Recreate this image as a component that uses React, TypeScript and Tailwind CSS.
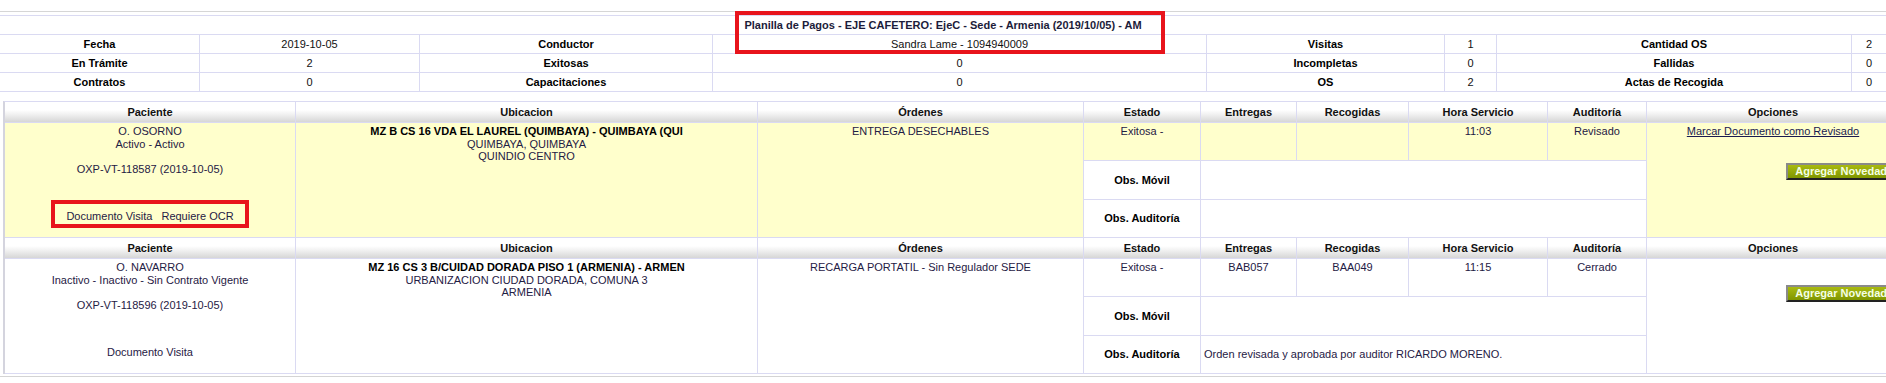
import React from "react";

const LAV = "border-[#dadaf2]";

function TopCell({ children, bold, last }: { children?: React.ReactNode; bold?: boolean; last?: boolean }) {
  return (
    <div
      className={`flex h-[19px] items-center justify-center border-b ${last ? "" : "border-r"} ${LAV} ${
        bold ? "font-bold text-black" : "text-[#111111]"
      }`}
    >
      {children}
    </div>
  );
}

function Head({ children, last }: { children: React.ReactNode; last?: boolean }) {
  return (
    <div
      className={`flex h-[21px] items-center justify-center border-b ${last ? "" : "border-r"} ${LAV} bg-[linear-gradient(to_bottom,#ffffff_40%,#f2f2f2_60%,#d6d6d6)] font-bold text-[#111111]`}
    >
      {children}
    </div>
  );
}

function HeaderRow() {
  return (
    <div className="grid grid-cols-[291px_462px_326px_117px_96px_112px_139px_99px_252px]">
      <Head>Paciente</Head>
      <Head>Ubicacion</Head>
      <Head>Órdenes</Head>
      <Head>Estado</Head>
      <Head>Entregas</Head>
      <Head>Recogidas</Head>
      <Head>Hora Servicio</Head>
      <Head>Auditoría</Head>
      <Head last>Opciones</Head>
    </div>
  );
}

function Button() {
  return (
    <span className="inline-flex h-[17px] items-center border-2 border-t-[#8a8a8a] border-l-[#8a8a8a] border-b-[#222222] border-r-[#222222] bg-[linear-gradient(to_bottom,#a9ba10,#7f9600)] px-[7px] text-[11px] font-bold text-[#f4ffe4]">
      Agregar Novedad
    </span>
  );
}

type Rec = {
  yellow: boolean;
  name: string;
  status: string;
  code: string;
  ocr: boolean;
  addr: string;
  addr2: string;
  addr3: string;
  order: string;
  entregas: string;
  recogidas: string;
  hora: string;
  auditoria: string;
  obsAud: string;
  link: boolean;
};

function Record({ r }: { r: Rec }) {
  const bg = r.yellow ? "bg-[#ffffcc]" : "bg-white";
  const cell = `border-b border-r ${LAV}`;
  return (
    <div className="grid grid-cols-[291px_462px_326px_117px_96px_112px_139px_99px_252px] grid-rows-[38px_39px_38px] leading-[1.15] text-[#1f2044]">
      <div className={`row-span-3 flex flex-col items-center pt-[2px] ${cell} ${bg}`}>
        <span>{r.name}</span>
        <span>{r.status}</span>
        <span className="mt-[12.65px]">{r.code}</span>
        <div className="relative mt-[34px]">
          <span>Documento Visita</span>
          {r.ocr && <span className="ml-[9px]">Requiere OCR</span>}
          {r.ocr && (
            <div className="absolute left-[-15px] right-[-15px] top-[-10px] bottom-[-6px] border-4 border-[#e8141c]" />
          )}
        </div>
      </div>
      <div className={`row-span-3 flex flex-col items-center pt-[2px] ${cell} ${bg}`}>
        <span className="font-bold text-black">{r.addr}</span>
        <span>{r.addr2}</span>
        <span>{r.addr3}</span>
      </div>
      <div className={`row-span-3 flex flex-col items-center pt-[2px] ${cell} ${bg}`}>
        <span>{r.order}</span>
      </div>
      <div className={`flex justify-center pt-[2px] ${cell} ${bg}`}>Exitosa -</div>
      <div className={`flex justify-center pt-[2px] ${cell} ${bg}`}>{r.entregas}</div>
      <div className={`flex justify-center pt-[2px] ${cell} ${bg}`}>{r.recogidas}</div>
      <div className={`flex justify-center pt-[2px] ${cell} ${bg}`}>{r.hora}</div>
      <div className={`flex justify-center pt-[2px] ${cell} ${bg}`}>{r.auditoria}</div>
      <div className={`row-span-3 flex flex-col items-center pt-[2px] border-b ${LAV} ${bg}`}>
        {r.link && (
          <a className="text-[#1a1a50] underline" href="#">
            Marcar Documento como Revisado
          </a>
        )}
        <div className={`flex w-full justify-end pr-[3px] ${r.link ? "mt-[25px]" : "mt-[24px]"}`}>
          <Button />
        </div>
      </div>
      <div className={`flex items-center justify-center font-bold text-black ${cell} bg-white`}>Obs. Móvil</div>
      <div className={`col-span-4 ${cell} bg-white`} />
      <div className={`flex items-center justify-center font-bold text-black ${cell} bg-white`}>Obs. Auditoría</div>
      <div className={`col-span-4 flex items-center pl-[3px] ${cell} bg-white`}>{r.obsAud}</div>
    </div>
  );
}

export default function App() {
  const recs: Rec[] = [
    {
      yellow: true,
      name: "O. OSORNO",
      status: "Activo - Activo",
      code: "OXP-VT-118587 (2019-10-05)",
      ocr: true,
      addr: "MZ B CS 16 VDA EL LAUREL (QUIMBAYA) - QUIMBAYA (QUI",
      addr2: "QUIMBAYA, QUIMBAYA",
      addr3: "QUINDIO CENTRO",
      order: "ENTREGA DESECHABLES",
      entregas: "",
      recogidas: "",
      hora: "11:03",
      auditoria: "Revisado",
      obsAud: "",
      link: true,
    },
    {
      yellow: false,
      name: "O. NAVARRO",
      status: "Inactivo - Inactivo - Sin Contrato Vigente",
      code: "OXP-VT-118596 (2019-10-05)",
      ocr: false,
      addr: "MZ 16 CS 3 B/CUIDAD DORADA PISO 1 (ARMENIA) - ARMEN",
      addr2: "URBANIZACION CIUDAD DORADA, COMUNA 3",
      addr3: "ARMENIA",
      order: "RECARGA PORTATIL - Sin Regulador SEDE",
      entregas: "BAB057",
      recogidas: "BAA049",
      hora: "11:15",
      auditoria: "Cerrado",
      obsAud: "Orden revisada y aprobada por auditor RICARDO MORENO.",
      link: false,
    },
  ];

  return (
    <div className="h-[383px] w-full overflow-hidden bg-white font-['Liberation_Sans',Arial,sans-serif] text-[11px] leading-[1.15] text-black">
      <div className="pt-[11px]">
        <div className="h-px bg-[#d6d6d6]" />
        <div className={`relative mt-[3px] border-t ${LAV}`}>
          <div className={`flex h-[19px] items-center justify-center border-b ${LAV} font-bold text-[#1c1c3a]`}>
            Planilla de Pagos - EJE CAFETERO: EjeC - Sede - Armenia (2019/10/05) - AM
          </div>
          <div className="grid grid-cols-[200px_220px_293px_494px_238px_52px_355px_34px]">
            <TopCell bold>Fecha</TopCell>
            <TopCell>2019-10-05</TopCell>
            <TopCell bold>Conductor</TopCell>
            <TopCell>Sandra Lame - 1094940009</TopCell>
            <TopCell bold>Visitas</TopCell>
            <TopCell>1</TopCell>
            <TopCell bold>Cantidad OS</TopCell>
            <TopCell last>2</TopCell>

            <TopCell bold>En Trámite</TopCell>
            <TopCell>2</TopCell>
            <TopCell bold>Exitosas</TopCell>
            <TopCell>0</TopCell>
            <TopCell bold>Incompletas</TopCell>
            <TopCell>0</TopCell>
            <TopCell bold>Fallidas</TopCell>
            <TopCell last>0</TopCell>

            <TopCell bold>Contratos</TopCell>
            <TopCell>0</TopCell>
            <TopCell bold>Capacitaciones</TopCell>
            <TopCell>0</TopCell>
            <TopCell bold>OS</TopCell>
            <TopCell>2</TopCell>
            <TopCell bold>Actas de Recogida</TopCell>
            <TopCell last>0</TopCell>
          </div>
          <div className="absolute left-[735px] top-[-5px] h-[43px] w-[430px] border-4 border-[#e8141c]" />
        </div>
      </div>

      <div className={`ml-[3px] mt-[9px] w-[1896px] border-l-2 border-t border-l-[#d4d4de] ${LAV}`}>
        <HeaderRow />
        <Record r={recs[0]} />
        <HeaderRow />
        <Record r={recs[1]} />
      </div>
      <div className="mt-[2px] h-px w-full bg-[#d4d4d4]" />
    </div>
  );
}
